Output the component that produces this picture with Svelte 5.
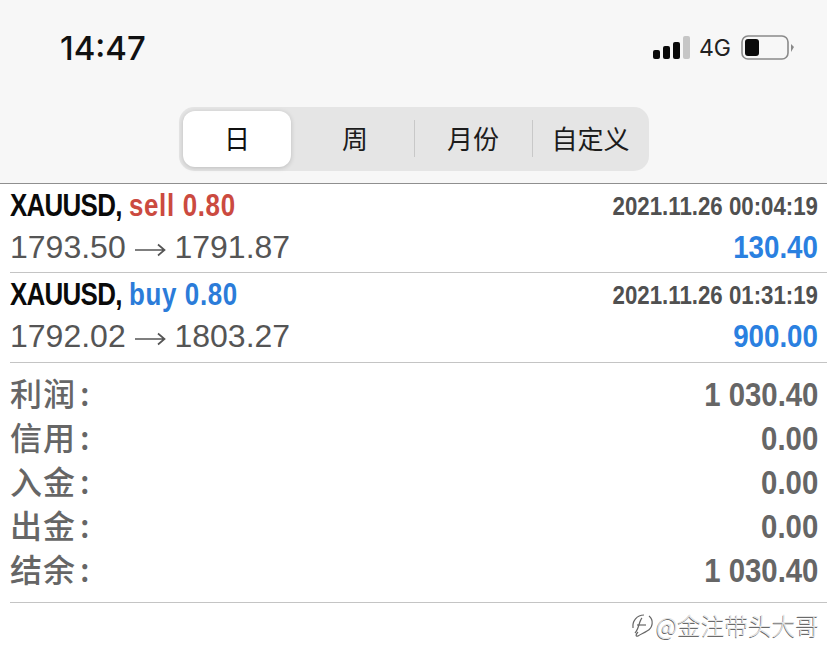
<script>
  const tabs = [
    { name: "日", active: true },
    { name: "周" },
    { name: "月份" },
    { name: "自定义" },
  ];
  const deals = [
    { side: "sell", from: "1793.50", to: "1791.87", time: "2021.11.26 00:04:19", profit: "130.40" },
    { side: "buy", from: "1792.02", to: "1803.27", time: "2021.11.26 01:31:19", profit: "900.00" },
  ];
  const totals = [
    ["利润", "1 030.40"],
    ["信用", "0.00"],
    ["入金", "0.00"],
    ["出金", "0.00"],
    ["结余", "1 030.40"],
  ];
</script>

<div class="page">
  <header class="top">
    <div class="status">
      <span class="clock">14:47</span>
      <div class="indicators">
        <svg class="signal" width="38" height="24" viewBox="0 0 38 24">
          <rect x="1" y="14" width="7" height="9" rx="2" fill="#0a0a0a" />
          <rect x="11" y="10" width="7" height="13" rx="2" fill="#0a0a0a" />
          <rect x="21" y="6" width="7" height="17" rx="2" fill="#0a0a0a" />
          <rect x="31" y="0" width="7" height="23" rx="2" fill="#c6c6c6" />
        </svg>
        <span class="net">4G</span>
        <svg class="battery" width="54" height="26" viewBox="0 0 54 26">
          <rect x="1" y="1" width="46" height="23" rx="6" fill="none" stroke="#8a8a8a" stroke-width="1.6" />
          <rect x="4" y="4" width="14" height="17" rx="3" fill="#0a0a0a" />
          <path d="M50 9 L53 12 L50 17 Z" fill="#8a8a8a" />
        </svg>
      </div>
    </div>
    <div class="segments">
      {#each tabs as tab, i}
        <button class="segment" class:active={tab.active} class:divided={i > 1}>{tab.name}</button>
      {/each}
    </div>
  </header>

  <main>
    {#each deals as deal}
      <div class="deal">
        <div class="line first">
          <span class="title"><span class="symbol">XAUUSD,</span> <span class="order {deal.side}">{deal.side} 0.80</span></span>
          <span class="time">{deal.time}</span>
        </div>
        <div class="line">
          <span class="prices">
            {deal.from}
            <svg class="arrow" width="31" height="16" viewBox="0 0 31 16" fill="none" stroke="#555" stroke-width="1.7">
              <path d="M0 8 H29 M23 2.5 L29.5 8 L23 13.5" />
            </svg>
            {deal.to}
          </span>
          <span class="profit">{deal.profit}</span>
        </div>
      </div>
    {/each}

    <div class="totals">
      {#each totals as [label, value]}
        <div class="total">
          <span class="label">{label}<span class="colon">:</span></span>
          <span class="value">{value}</span>
        </div>
      {/each}
    </div>
  </main>

  <footer class="mark">
    <svg width="24" height="26" viewBox="0 0 24 26" fill="none" stroke="#666" stroke-width="1.2">
      <path d="M3 16 C2 9 7 3 14 3" />
      <path d="M19 4 C24 8 23 16 17 19 C14 21 11 22 8 24 C5 25 6 22 8 20" />
      <path d="M7 13 H16" />
      <path d="M5 21 C9 17 9 9 12 6" />
    </svg>
    <span>@金注带头大哥</span>
  </footer>
</div>

<style>
  :global(body) {
    margin: 0;
    background: #fff;
  }

  .page {
    width: 827px;
    height: 665px;
    overflow: hidden;
    font-family: "Liberation Sans", "Noto Sans CJK SC", sans-serif;
    color: #111;
  }

  .top {
    height: 184px;
    box-sizing: border-box;
    background: #f7f7f7;
    border-bottom: 1px solid #8f8f8f;
    padding-top: 28px;
  }

  .status {
    display: flex;
    justify-content: space-between;
    align-items: center;
    height: 40px;
    padding: 0 32px 0 60px;
  }

  .clock {
    font-family: "Inter", sans-serif;
    font-size: 33px;
    font-weight: 500;
    color: #111;
  }

  .indicators {
    display: flex;
    align-items: center;
    gap: 9px;
  }

  .net {
    font-family: "Inter", sans-serif;
    font-size: 23px;
    color: #222;
    margin-right: 1px;
  }

  .segments {
    display: grid;
    grid-template-columns: 114px 118px 118px 1fr;
    width: 470px;
    height: 64px;
    box-sizing: border-box;
    margin: 39px 0 0 179px;
    padding: 3px 0 3px 3px;
    border-radius: 15px;
    background: #e5e5e5;
  }

  .segment {
    position: relative;
    border: none;
    background: none;
    padding: 0 0 4px;
    font-family: "Noto Sans CJK SC", sans-serif;
    font-size: 26px;
    color: #1c1c1c;
  }

  .segment.active {
    margin: 1px 5px 1px 1px;
    background: #fff;
    border-radius: 12px;
    color: #111;
    box-shadow: 0 1px 5px rgba(0, 0, 0, 0.18);
  }

  .segment.divided::before {
    content: "";
    position: absolute;
    left: 0;
    top: 10px;
    height: 37px;
    width: 1px;
    background: #c8c8c8;
  }

  .deal {
    height: 90px;
    box-sizing: border-box;
    margin-left: 10px;
    border-bottom: 1px solid #c4c4c4;
  }

  .deal:first-child {
    height: 89px;
  }

  .line {
    display: flex;
    justify-content: space-between;
    align-items: center;
    height: 38px;
    margin-left: -10px;
    padding: 0 9px 0 10px;
  }

  .line.first {
    height: 44px;
  }

  .title,
  .time,
  .profit,
  .value {
    display: inline-block;
    font-weight: 700;
    white-space: nowrap;
  }

  .title {
    font-size: 31px;
    color: #0a0a0a;
    transform: scaleX(0.836);
    transform-origin: left;
  }

  .symbol {
    letter-spacing: -0.85px;
  }

  .order {
    letter-spacing: 0.8px;
  }

  .sell {
    color: #cb4a40;
  }

  .buy {
    color: #2b7cd9;
  }

  .time {
    font-size: 26px;
    color: #505050;
    transform: scaleX(0.856);
    transform-origin: right;
  }

  .prices {
    font-size: 32px;
    color: #555;
    white-space: nowrap;
  }

  .arrow {
    vertical-align: 0;
  }

  .profit {
    font-size: 32px;
    color: #2a80e0;
    transform: scaleX(0.865);
    transform-origin: right;
  }

  .totals {
    margin-left: 10px;
    padding: 10px 0 9px;
    border-bottom: 1px solid #c4c4c4;
  }

  .total {
    display: flex;
    justify-content: space-between;
    align-items: center;
    height: 44px;
    padding-right: 9px;
  }

  .label {
    margin-top: -6px;
    font-family: "Noto Sans CJK SC", sans-serif;
    font-size: 32px;
    font-weight: 500;
    color: #666;
    letter-spacing: 1px;
  }

  .colon {
    margin-left: 4px;
  }

  .value {
    font-size: 33px;
    color: #666;
    transform: scaleX(0.89);
    transform-origin: right;
  }

  .mark {
    display: flex;
    justify-content: flex-end;
    align-items: center;
    gap: 2px;
    height: 44px;
    padding-right: 8px;
    font-family: "Noto Sans CJK SC", sans-serif;
    font-size: 23.6px;
    font-weight: 300;
    color: #e4e4e4;
    text-shadow: -0.6px 0.6px 0 #6a6a6a;
  }
</style>
